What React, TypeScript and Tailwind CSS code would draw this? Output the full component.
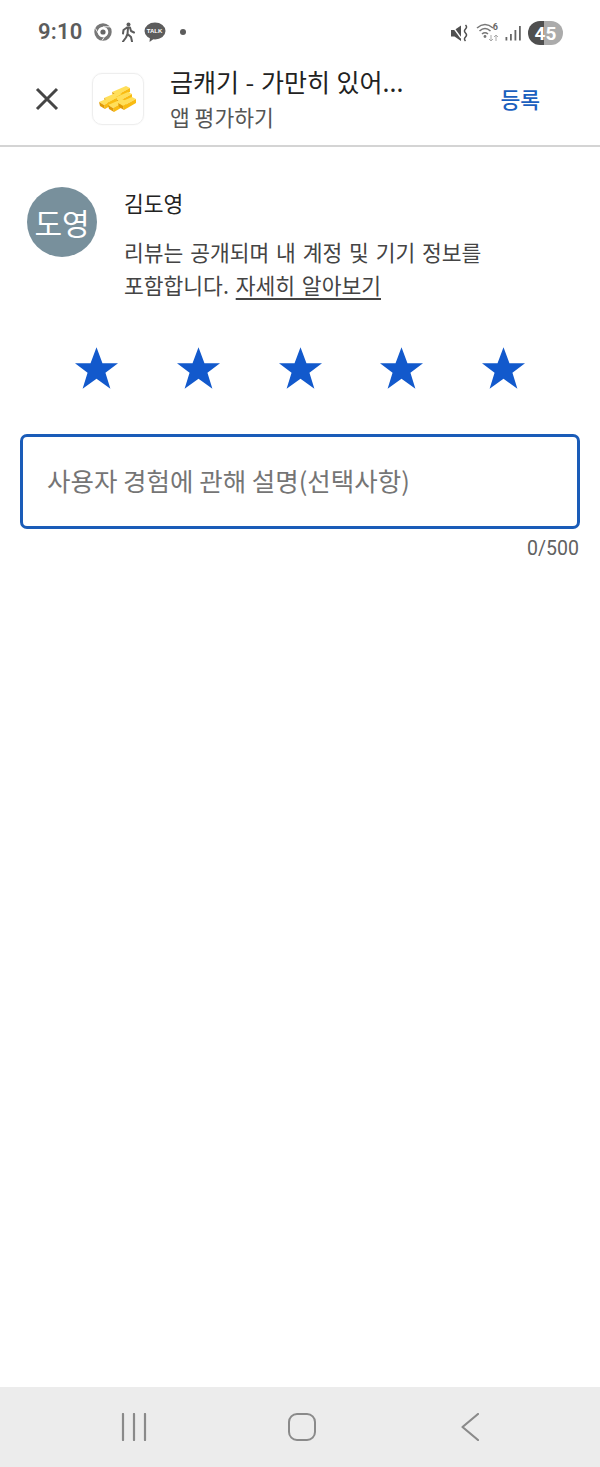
import React from "react";

const KR = { fontFamily: '"Noto Sans CJK KR", "Noto Sans", sans-serif' };

function Star() {
  return (
    <svg width="43" height="42" viewBox="0 0 130 125" className="block">
      <path d="M65 0 L83 48 L130 48 L92 77 L107 125 L65 95 L23 125 L38 77 L0 48 L47 48 Z" fill="#1259cc" />
    </svg>
  );
}

function Bar({ x, y }: { x: number; y: number }) {
  return (
    <g transform={`translate(${x} ${y})`}>
      <path d="M0 6 L14 0 L18 2 L5 9 Z" fill="#ffdf5a" />
      <path d="M5 9 L18 2 L18 6 L6 13 Z" fill="#f9bb12" />
      <path d="M0 6 L5 9 L6 13 L1 10 Z" fill="#e09a06" />
    </g>
  );
}

function GoldBars() {
  return (
    <svg width="38" height="28" viewBox="0 0 38 28">
      <Bar x={13} y={1} />
      <Bar x={5} y={7} />
      <Bar x={15} y={7} />
      <Bar x={0} y={11} />
      <Bar x={9} y={14} />
      <Bar x={19} y={12} />
    </svg>
  );
}

function StatusLeft() {
  return (
    <div className="flex items-center">
      <span className="text-[22px] font-semibold leading-none text-[#5c5c5c] tracking-[0.2px]" style={{ fontFamily: "Roboto, sans-serif" }}>
        9:10
      </span>
      <svg width="18" height="18" viewBox="0 0 18 18" className="ml-[11px]">
        <circle cx="9" cy="9" r="7" fill="none" stroke="#777" strokeWidth="3.4" />
        <circle cx="9" cy="9" r="2.6" fill="#666" />
        <path d="M9 3.8 H17 M5 11.5 L1.5 5.5 M12 11.5 L8 17.5" stroke="#fff" strokeWidth="0.9" />
      </svg>
      <svg width="14" height="20" viewBox="0 0 14 20" className="ml-[9px]">
        <circle cx="7.5" cy="2.5" r="2" fill="#5c5c5c" />
        <path d="M6 5.5 L9 5.5 L10 9 L13 10.5 M6 5.5 L2.5 8 L2 11.5 M7 6 L6.5 12 L10 15 L11 19.5 M6.5 12 L5 15.5 L2 19.5" stroke="#5c5c5c" strokeWidth="2" fill="none" strokeLinecap="round" strokeLinejoin="round" />
      </svg>
      <div className="relative ml-[9px] w-[22px] h-[21px]">
        <svg width="22" height="21" viewBox="0 0 22 21" className="block">
          <ellipse cx="11" cy="9" rx="10.5" ry="8.5" fill="#5c5c5c" />
          <path d="M6 15 L5.5 20 L11 16 Z" fill="#5c5c5c" />
        </svg>
        <span className="absolute left-0 right-0 top-[6px] text-center text-[6px] leading-[6px] font-bold text-white" style={{ fontFamily: '"Liberation Sans", sans-serif' }}>
          TALK
        </span>
      </div>
      <div className="ml-[14px] w-[6px] h-[6px] rounded-full bg-[#5c5c5c]" />
    </div>
  );
}

function StatusRight() {
  return (
    <div className="flex items-center">
      <svg width="17" height="18" viewBox="0 0 17 18">
        <path d="M0 6 H3.5 L10 1.5 V17 L3.5 12.5 H0 Z" fill="#4f4f4f" />
        <path d="M0.5 1 L10 14" stroke="#fff" strokeWidth="1.3" />
        <path d="M14.5 1 Q16.5 3 14.5 5 Q12.5 7 14.5 9 Q16.5 11 14.5 13 Q12.5 15 14.5 17" stroke="#4f4f4f" strokeWidth="1.5" fill="none" />
      </svg>
      <div className="relative ml-[8px] w-[24px] h-[22px]">
        <svg width="24" height="22" viewBox="0 0 24 22" className="block">
          <path d="M1 6 Q9 -1 17 6 M3.5 9 Q9 4 14.5 9 M6 12 Q9 9.5 12 12" stroke="#777" strokeWidth="1.6" fill="none" />
          <circle cx="9" cy="14.5" r="1.4" fill="#777" />
          <path d="M15 13 V19 M13 17 L15 19 L17 17" stroke="#aaa" strokeWidth="1" fill="none" />
          <path d="M20 19 V13 M18 15 L20 13 L22 15" stroke="#aaa" strokeWidth="1" fill="none" />
        </svg>
        <span className="absolute right-[2px] top-0 text-[9px] leading-[10px] font-bold text-[#666]" style={{ fontFamily: "Roboto, sans-serif" }}>
          6
        </span>
      </div>
      <svg width="16" height="16" viewBox="0 0 16 16" className="ml-[5px]">
        <rect x="0.5" y="12" width="1.8" height="3.5" fill="#666" />
        <rect x="5" y="9" width="1.8" height="6.5" fill="#666" />
        <rect x="9.5" y="5" width="1.8" height="10.5" fill="#666" />
        <rect x="14" y="1" width="1.8" height="14.5" fill="#666" />
      </svg>
      <div className="relative ml-[7px] w-[35px] h-[24px] rounded-full overflow-hidden flex">
        <div className="w-[16px] bg-[#4f4f4f]" />
        <div className="flex-1 bg-[#ababab]" />
        <span className="absolute inset-0 flex items-center justify-center text-[19px] font-bold text-white leading-none" style={{ fontFamily: "Roboto, sans-serif" }}>
          45
        </span>
      </div>
    </div>
  );
}

export default function App() {
  return (
    <div className="w-[600px] h-[1467px] flex flex-col bg-white overflow-hidden" style={KR}>
      <div className="h-[66px] shrink-0 flex items-start justify-between pl-[38px] pr-[37px] pt-[21px]">
        <StatusLeft />
        <StatusRight />
      </div>

      <header className="h-[81px] shrink-0 flex items-center border-b-2 border-[#d4d4d4] pb-[13px]">
        <svg width="24" height="24" viewBox="0 0 24 24" className="ml-[35px] shrink-0">
          <path d="M2 2 L22 22 M22 2 L2 22" stroke="#454545" strokeWidth="3" strokeLinecap="butt" />
        </svg>
        <div className="ml-[33px] w-[52px] h-[52px] shrink-0 rounded-[10px] border border-[#eeeeee] flex items-center justify-center shadow-[0_0_2px_rgba(0,0,0,0.05)]">
          <GoldBars />
        </div>
        <div className="ml-[26px] flex-1 min-w-0 flex flex-col">
          <div className="text-[25px] leading-[35px] text-[#222222] whitespace-nowrap [word-spacing:1px]">금캐기 - 가만히 있어...</div>
          <div className="text-[21.5px] leading-[35px] text-[#555555] whitespace-nowrap">앱 평가하기</div>
        </div>
        <div className="mr-[60px] text-[21.5px] font-medium leading-none text-[#1a5fbe]">등록</div>
      </header>

      <section className="flex pl-[27px] pr-[20px] pt-[39px]">
        <div className="mt-[1px] w-[70px] h-[70px] shrink-0 rounded-full bg-[#78909c] flex items-center justify-center text-[30px] leading-none text-white">
          도영
        </div>
        <div className="ml-[27px] flex-1">
          <div className="text-[21.5px] leading-[34px] text-[#222222]">김도영</div>
          <div className="mt-[15px] text-[21.5px] leading-[33px] text-[#444444] whitespace-nowrap [word-spacing:2px]">
            리뷰는 공개되며 내 계정 및 기기 정보를
            <br />
            포함합니다. <span className="underline underline-offset-[4px] decoration-2">자세히 알아보기</span>
          </div>
        </div>
      </section>

      <div className="flex justify-between pl-[75px] pr-[75px] mt-[46px]">
        <Star />
        <Star />
        <Star />
        <Star />
        <Star />
      </div>

      <div className="mx-[20px] mt-[45px] h-[95px] rounded-[7px] border-[3px] border-[#1a5cb8] flex items-center pl-[24px] pb-[3px]">
        <span className="text-[25.5px] leading-none text-[#757575]">사용자 경험에 관해 설명(선택사항)</span>
      </div>
      <div className="mt-[9px] pr-[21px] text-right text-[19.5px] leading-[22px] text-[#616161]" style={{ fontFamily: "Roboto, sans-serif" }}>
        0/500
      </div>

      <div className="flex-1" />

      <nav className="h-[80px] shrink-0 bg-[#ececec] grid grid-cols-3 items-center pl-[50px] pr-[46px] pb-[1px]">
        <div className="flex justify-center">
          <svg width="26" height="28" viewBox="0 0 26 28">
            <path d="M2 1 V27 M13 1 V27 M24 1 V27" stroke="#8a8a8a" strokeWidth="2.2" strokeLinecap="round" />
          </svg>
        </div>
        <div className="flex justify-center">
          <div className="w-[28px] h-[28px] rounded-[9px] border-[2.5px] border-[#8a8a8a]" />
        </div>
        <div className="flex justify-center">
          <svg width="18" height="28" viewBox="0 0 18 28">
            <path d="M17 1 L1.5 14 L17 27" stroke="#8a8a8a" strokeWidth="2.2" fill="none" strokeLinecap="round" strokeLinejoin="round" />
          </svg>
        </div>
      </nav>
    </div>
  );
}
